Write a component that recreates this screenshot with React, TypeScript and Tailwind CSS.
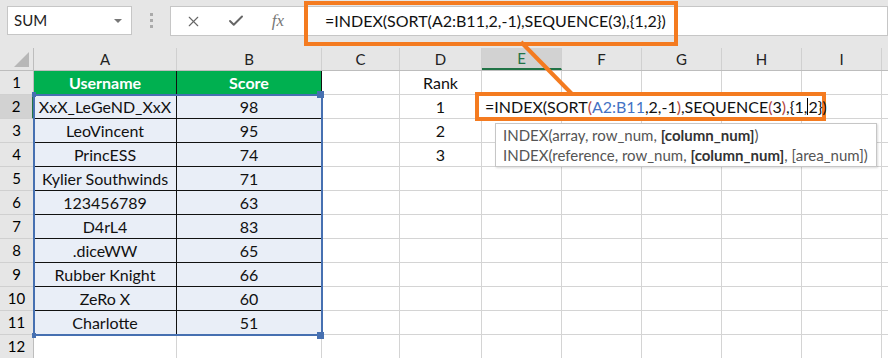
import { X, Check } from "lucide-react";

const font = { fontFamily: "Lato, 'Open Sans', sans-serif" };

const cols = [
  { key: "A", w: "w-[143px]" },
  { key: "B", w: "w-[145px]" },
  { key: "C", w: "w-[78px]" },
  { key: "D", w: "w-[82px]" },
  { key: "E", w: "w-[80px]" },
  { key: "F", w: "w-[80px]" },
  { key: "G", w: "w-[80px]" },
  { key: "H", w: "w-[80px]" },
  { key: "I", w: "w-[80px]" },
  { key: "J", w: "w-[80px]" },
];

const players = [
  ["XxX_LeGeND_XxX", "98"],
  ["LeoVincent", "95"],
  ["PrincESS", "74"],
  ["Kylier Southwinds", "71"],
  ["123456789", "63"],
  ["D4rL4", "83"],
  [".diceWW", "65"],
  ["Rubber Knight", "66"],
  ["ZeRo X", "60"],
  ["Charlotte", "51"],
];

function Toolbar() {
  return (
    <div className="h-[48px] bg-[#e6e6e6] flex items-start pt-[6px] pl-[7px]">
      <div className="w-[125px] h-[29px] bg-white border border-[#c6c6c6] flex items-center justify-between pl-[6px] pr-[9px]">
        <span className="text-[15px] text-[#222]">SUM</span>
        <span className="w-0 h-0 border-l-[4px] border-r-[4px] border-t-[4px] border-l-transparent border-r-transparent border-t-[#777]" />
      </div>
      <div className="w-[38px] h-[29px] flex flex-col items-center justify-center gap-[3px]">
        <span className="w-[3px] h-[3px] bg-[#aaa]" />
        <span className="w-[3px] h-[3px] bg-[#aaa]" />
        <span className="w-[3px] h-[3px] bg-[#aaa]" />
      </div>
      <div className="flex-1 min-w-0 h-[30px] bg-white border border-[#c6c6c6] flex items-center overflow-hidden">
        <div className="w-[44px] shrink-0 flex justify-center">
          <X size={17} strokeWidth={1.6} className="text-[#666]" />
        </div>
        <div className="w-[42px] shrink-0 flex justify-center">
          <Check size={18} strokeWidth={2.6} className="text-[#666]" />
        </div>
        <div className="w-[42px] shrink-0 flex justify-center">
          <span className="italic text-[17px] text-[#777]" style={{ fontFamily: "'Liberation Serif', serif" }}>
            fx
          </span>
        </div>
        <div className="pl-[26px] text-[16px] text-[#111] whitespace-nowrap">
          =INDEX(SORT(A2:B11,2,-1),SEQUENCE(3),{"{"}1,2{"}"})
        </div>
      </div>
    </div>
  );
}

function HeaderRow() {
  return (
    <div className="flex h-[23px] bg-[#e6e6e6] border-b border-[#bdbdbd]">
      <div className="w-[34px] shrink-0 border-r border-[#bdbdbd] relative">
        <span
          className="absolute right-[4px] bottom-[3px] w-0 h-0"
          style={{ borderBottom: "15px solid #b7b7b7", borderLeft: "15px solid transparent" }}
        />
      </div>
      {cols.map((c) => (
        <div
          key={c.key}
          className={`${c.w} shrink-0 flex items-center justify-center text-[15px] border-r border-[#d0d0d0] ${
            c.key === "E" ? "bg-[#d2d2d2] border-b-2 border-b-[#217346] text-[#217346]" : "text-[#222]"
          }`}
        >
          {c.key === "J" ? "" : c.key}
        </div>
      ))}
    </div>
  );
}

function Row({ n }: { n: number }) {
  const data = n >= 2 && n <= 11 ? players[n - 2] : null;
  return (
    <div className="flex h-[24px]">
      <div
        className={`w-[34px] shrink-0 flex items-center justify-center text-[15px] border-b border-[#d0d0d0] ${
          n === 2 ? "bg-[#d2d2d2] border-r-2 border-r-[#217346]" : "bg-[#e6e6e6] border-r border-r-[#bdbdbd]"
        }`}
      >
        {n}
      </div>
      {cols.map((c) => {
        let content = "";
        let cls = "border-r border-b border-[#d4d4d4] text-[#111]";
        if (n === 1 && (c.key === "A" || c.key === "B")) {
          content = c.key === "A" ? "Username" : "Score";
          cls = "bg-[#00b050] text-white font-bold border-r border-b border-r-[#111] border-b-[#00b050]";
        } else if (data && (c.key === "A" || c.key === "B")) {
          content = c.key === "A" ? data[0] : data[1];
          cls = "bg-[#e9eef7] text-[#111] border-r border-b border-[#111]";
        } else if (c.key === "D") {
          if (n === 1) content = "Rank";
          if (n >= 2 && n <= 4) content = String(n - 1);
        }
        return (
          <div key={c.key} className={`${c.w} shrink-0 flex items-center justify-center text-[16px] whitespace-nowrap ${cls}`}>
            {content}
          </div>
        );
      })}
    </div>
  );
}

export default function App() {
  const rows = Array.from({ length: 12 }, (_, i) => i + 1);
  return (
    <div className="w-[888px] h-[358px] bg-white relative overflow-hidden" style={font}>
      <Toolbar />
      <HeaderRow />
      {rows.map((n) => (
        <Row key={n} n={n} />
      ))}

      {/* reference highlight around A2:B11 */}
      <div className="absolute left-[33px] top-[94px] w-[290px] h-[242px] border-2 border-[#4670b1]" />
      <span className="absolute left-[317px] top-[91px] w-[7px] h-[7px] bg-[#4670b1]" />
      <span className="absolute left-[317px] top-[332px] w-[7px] h-[7px] bg-[#4670b1]" />
      <span className="absolute left-[32px] top-[92px] w-[4px] h-[5px] bg-[#4670b1]" />
      <span className="absolute left-[32px] top-[333px] w-[4px] h-[5px] bg-[#4670b1]" />

      {/* callout boxes */}
      <div className="absolute left-[304px] top-[1px] w-[374px] h-[45px] border-4 border-[#f47b20]" />
      <svg className="absolute left-0 top-0 pointer-events-none" width="888" height="358">
        <line x1="521" y1="42" x2="572" y2="94" stroke="#f47b20" strokeWidth="4" />
      </svg>

      <div className="absolute left-[475px] top-[92px] w-[351px] h-[29px] border-4 border-[#f47b20] bg-white flex items-center pl-[6px] text-[16px] text-[#111] whitespace-nowrap">
        <span>=INDEX(SORT</span>
        <span className="text-[#b5443c]">(</span>
        <span className="text-[#4472c4]">A2:B11</span>
        <span>,2,-1</span>
        <span className="text-[#b5443c]">)</span>
        <span>,SEQUENCE</span>
        <span className="text-[#b5443c]">(</span>
        <span>3</span>
        <span className="text-[#b5443c]">)</span>
        <span>,{"{"}1,</span>
        <span className="w-px h-[17px] bg-black shrink-0" />
        <span>2{"}"})</span>
      </div>

      <div className="absolute left-[495px] top-[123px] w-[382px] h-[44px] bg-white border border-[#c6c6c6] shadow-[1px_1px_2px_rgba(0,0,0,0.15)] px-[7px] pt-[1px] text-[15px] text-[#555] leading-[20px] whitespace-nowrap">
        <div>
          INDEX(array, row_num, <span className="font-bold text-[#333]">[column_num]</span>)
        </div>
        <div>
          INDEX(reference, row_num, <span className="font-bold text-[#333]">[column_num]</span>, [area_num])
        </div>
      </div>
    </div>
  );
}
